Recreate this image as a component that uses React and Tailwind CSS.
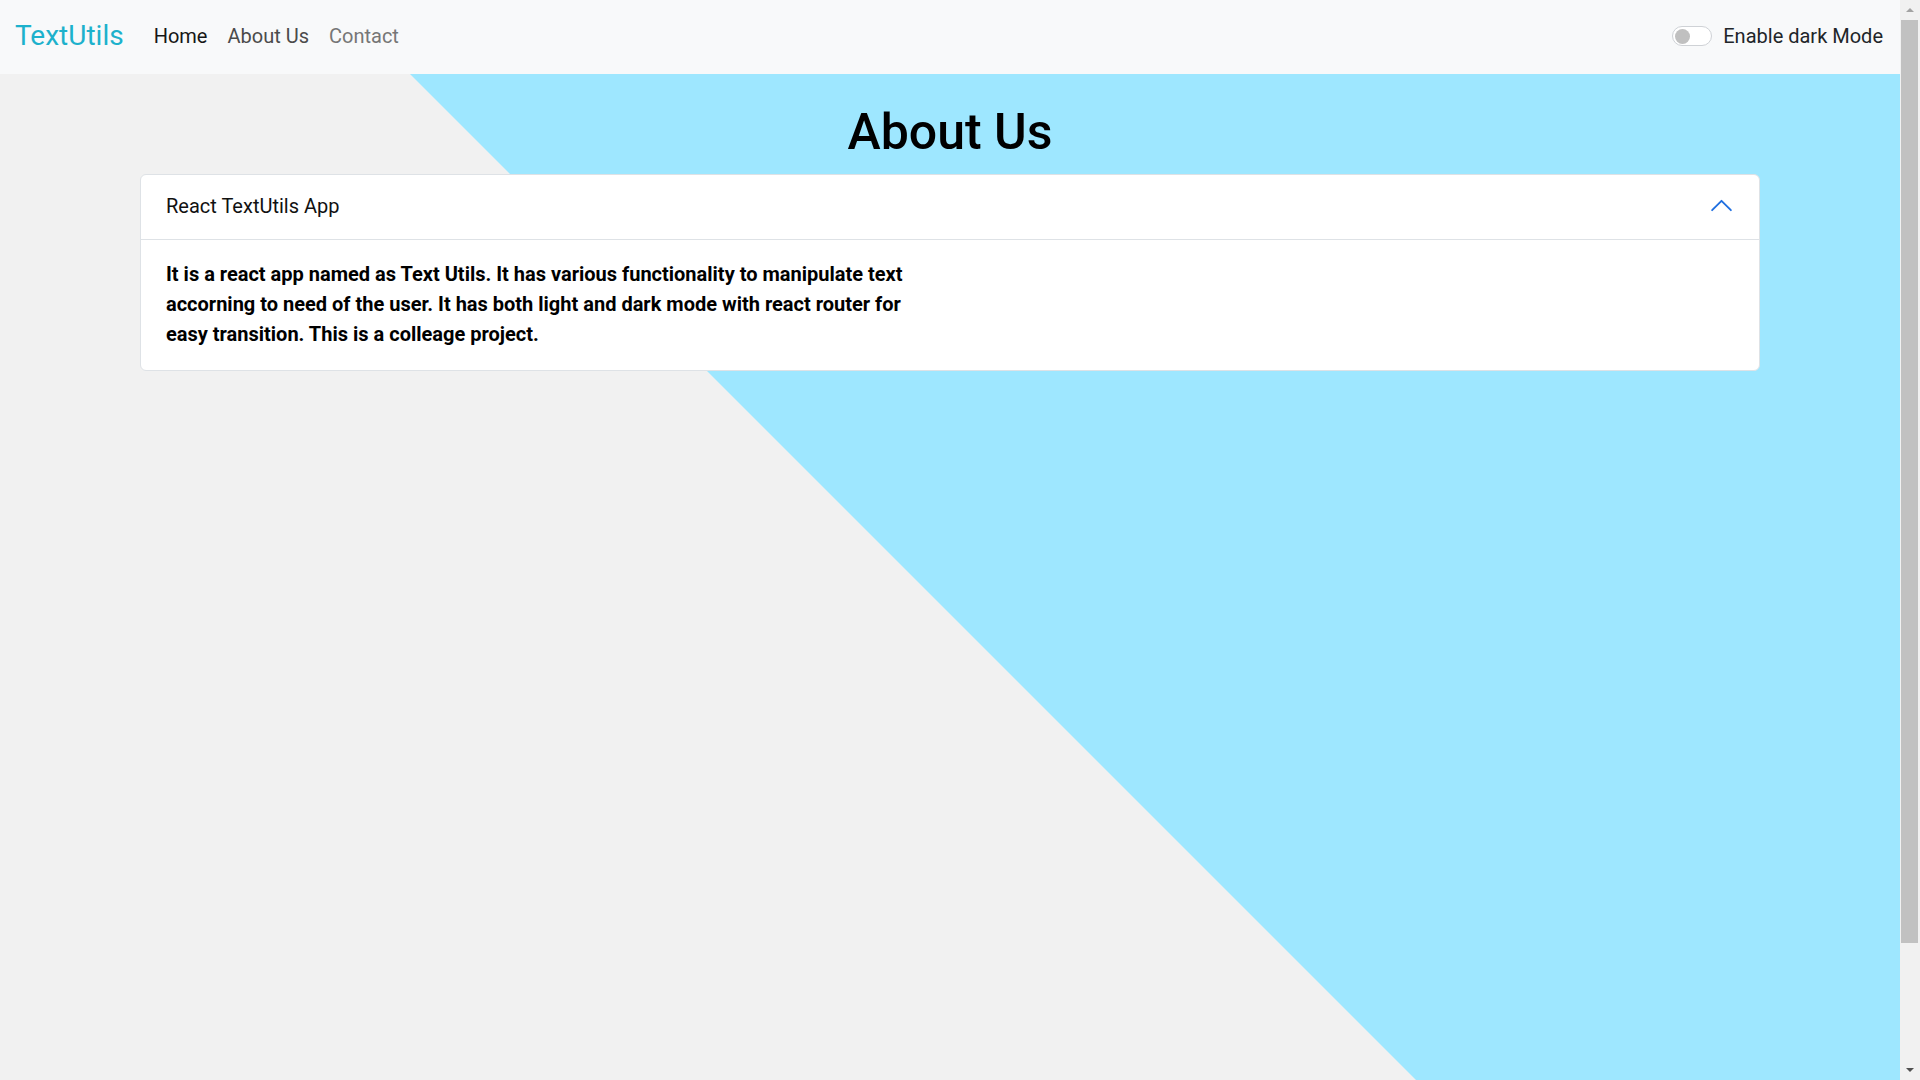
import React from "react";

const navLinks = [
  { label: "Home", color: "text-[#161616]" },
  { label: "About Us", color: "text-[#4b4b4b]" },
  { label: "Contact", color: "text-[#767676]" },
];

const ChevronUp = () => (
  <svg width="25" height="25" viewBox="0 0 16 16" className="shrink-0 -mt-[1px]">
    <path
      d="M2 11L8 5L14 11"
      fill="none"
      stroke="#1f6fe0"
      strokeWidth="1.2"
      strokeLinecap="round"
      strokeLinejoin="round"
    />
  </svg>
);

// classic window scrollbar on the right edge
const Scrollbar = () => (
  <div className="w-[20px] shrink-0 bg-[#f1f1f1] flex flex-col">
    <div className="h-[20px] flex items-center justify-center">
      <div className="w-0 h-0 border-x-[4px] border-x-transparent border-b-[4px] border-b-[#a3a3a3]" />
    </div>
    <div className="h-[923px] ml-[1px] mr-[2px] bg-[#c1c1c1]" />
    <div className="flex-1" />
    <div className="h-[20px] flex items-center justify-center">
      <div className="w-0 h-0 border-x-[4px] border-x-transparent border-t-[4px] border-t-[#505050]" />
    </div>
  </div>
);

const App = () => {
  return (
    <div className="h-screen flex overflow-hidden bg-[#f1f1f1] text-[#212529] font-['Roboto','Liberation_Sans',sans-serif]">
      <div className="flex-1 flex flex-col overflow-hidden">
        <nav className="h-[74px] shrink-0 bg-[#f8f9fa] flex items-center justify-between pl-[15px] pr-[17px] pb-[2px]">
          <div className="flex items-center">
            <span className="text-[28px] leading-[36px] text-[#1db1cc] mr-[20px]">TextUtils</span>
            <ul className="flex items-center">
              {navLinks.map((link) => (
                <li key={link.label} className={`px-[10px] text-[20px] ${link.color}`}>
                  {link.label}
                </li>
              ))}
            </ul>
          </div>
          <div className="flex items-center gap-[11px]">
            {/* dark mode switch, off */}
            <div className="w-[40px] h-[20px] rounded-full border border-[#cfd2d6] bg-white flex items-center px-[2px]">
              <div className="w-[15px] h-[15px] rounded-full bg-[#c0c0c0]" />
            </div>
            <span className="text-[20px] text-[#212529]">Enable dark Mode</span>
          </div>
        </nav>

        <main className="relative flex-1">
          {/* diagonal backdrop */}
          <svg className="absolute inset-0 w-full h-full" aria-hidden="true">
            <polygon points="410,0 4000,0 4000,3590 410,0" fill="#9ee7ff" />
          </svg>

          <div className="relative max-w-[1650px] mx-auto px-[15px] pt-[28px]">
            <h1 className="text-center text-[50px] leading-[60px] font-medium text-black mb-[12px]">
              About Us
            </h1>

            <div className="bg-white border border-[#dee2e6] rounded-[6px]">
              <div className="h-[65px] flex items-center justify-between px-[25px] pb-[2px] border-b border-[#dee2e6]">
                <span className="text-[20px] text-[#111]">React TextUtils App</span>
                <ChevronUp />
              </div>
              <div className="px-[25px] pt-[19px] pb-[21px]">
                <p className="max-w-[745px] text-[20px] leading-[30px] font-bold text-black">
                  It is a react app named as Text Utils. It has various functionality to manipulate text accorning to need of the user. It has both light and dark mode with react router for easy transition. This is a colleage project.
                </p>
              </div>
            </div>
          </div>
        </main>
      </div>
      <Scrollbar />
    </div>
  );
};

export default App;
